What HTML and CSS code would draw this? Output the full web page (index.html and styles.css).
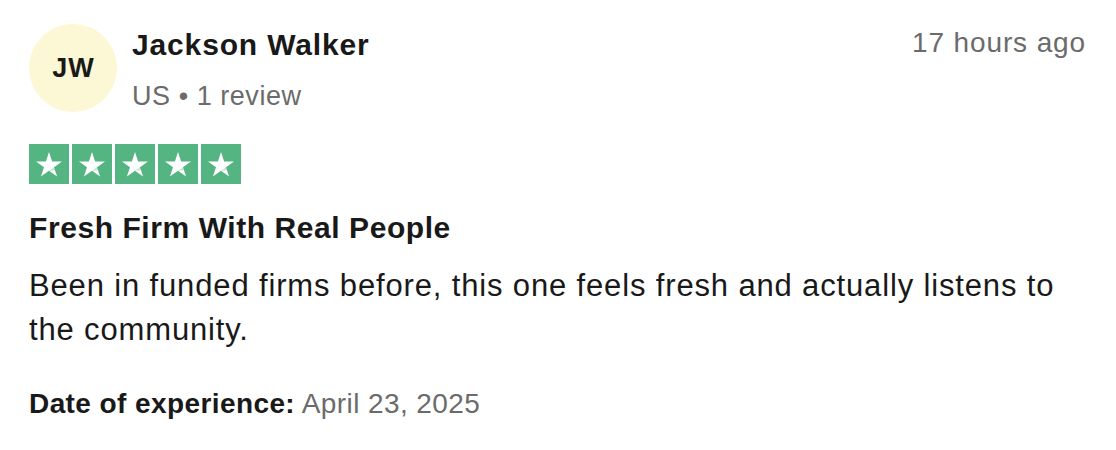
FILE: index.html
```html
<!DOCTYPE html>
<html lang="en">
<head>
<meta charset="utf-8">
<link rel="stylesheet" href="styles.css">
</head>
<body>
<article class="review">
  <header class="review-head">
    <div class="avatar">JW</div>
    <div class="consumer">
      <div class="name">Jackson Walker</div>
      <div class="meta">US • 1 review</div>
    </div>
    <time class="time">17 hours ago</time>
  </header>
  <div class="stars" aria-label="Rated 5 out of 5">
    <span class="star"><svg viewBox="0 0 40 40"><polygon points="20,8 23.1,17.4 33,17.4 25,23.2 28.1,32.6 20,26.8 11.9,32.6 15,23.2 7,17.4 16.9,17.4" fill="#fff"/><polygon points="25,23.2 26,26.3 20,26.8" fill="#54b582" opacity="0.35"/></svg></span>
    <span class="star"><svg viewBox="0 0 40 40"><polygon points="20,8 23.1,17.4 33,17.4 25,23.2 28.1,32.6 20,26.8 11.9,32.6 15,23.2 7,17.4 16.9,17.4" fill="#fff"/><polygon points="25,23.2 26,26.3 20,26.8" fill="#54b582" opacity="0.35"/></svg></span>
    <span class="star"><svg viewBox="0 0 40 40"><polygon points="20,8 23.1,17.4 33,17.4 25,23.2 28.1,32.6 20,26.8 11.9,32.6 15,23.2 7,17.4 16.9,17.4" fill="#fff"/><polygon points="25,23.2 26,26.3 20,26.8" fill="#54b582" opacity="0.35"/></svg></span>
    <span class="star"><svg viewBox="0 0 40 40"><polygon points="20,8 23.1,17.4 33,17.4 25,23.2 28.1,32.6 20,26.8 11.9,32.6 15,23.2 7,17.4 16.9,17.4" fill="#fff"/><polygon points="25,23.2 26,26.3 20,26.8" fill="#54b582" opacity="0.35"/></svg></span>
    <span class="star"><svg viewBox="0 0 40 40"><polygon points="20,8 23.1,17.4 33,17.4 25,23.2 28.1,32.6 20,26.8 11.9,32.6 15,23.2 7,17.4 16.9,17.4" fill="#fff"/><polygon points="25,23.2 26,26.3 20,26.8" fill="#54b582" opacity="0.35"/></svg></span>
  </div>
  <h2 class="title">Fresh Firm With Real People</h2>
  <p class="body">Been in funded firms before, this one feels fresh and actually listens to the community.</p>
  <p class="date"><strong>Date of experience:</strong> April 23, 2025</p>
</article>
</body>
</html>
```

FILE: styles.css
```css
* { box-sizing: border-box; }
html, body { margin: 0; background: #fff; }
body {
  font-family: "Liberation Sans", Arial, Helvetica, sans-serif;
  color: #191919;
}
.review {
  padding: 24px 30px 0 29px;
}
.review-head {
  display: flex;
  align-items: flex-start;
}
.avatar {
  width: 88px;
  height: 88px;
  border-radius: 50%;
  background: #fcf8d5;
  display: flex;
  align-items: center;
  justify-content: center;
  font-weight: 700;
  font-size: 27px;
  letter-spacing: 1px;
  padding-left: 1px;
  color: #191919;
  flex: none;
}
.consumer {
  margin-left: 15px;
  padding-top: 4px;
  flex: 1;
}
.name {
  font-size: 30px;
  font-weight: 700;
  line-height: 34px;
  letter-spacing: 0.85px;
}
.meta {
  font-size: 27px;
  line-height: 30px;
  margin-top: 19px;
  letter-spacing: 0.54px;
  color: #6b6b6b;
}
.time {
  font-size: 28px;
  line-height: 34px;
  padding-top: 2px;
  letter-spacing: 0.88px;
  color: #6b6b6b;
}
.stars {
  display: flex;
  gap: 3px;
  margin-top: 32px;
}
.star {
  width: 40px;
  height: 40px;
  background: #54b582;
  display: block;
}
.star svg { width: 40px; height: 40px; display: block; }
.title {
  margin: 26px 0 0;
  font-size: 30px;
  font-weight: 700;
  line-height: 36px;
  letter-spacing: 0.57px;
}
.body {
  margin: 18px 0 0;
  font-size: 31px;
  line-height: 44px;
  letter-spacing: 0.85px;
}
.date {
  margin: 36px 0 0;
  font-size: 28px;
  line-height: 32px;
  letter-spacing: 0.41px;
  color: #6b6b6b;
}
.date strong { color: #191919; }
```
